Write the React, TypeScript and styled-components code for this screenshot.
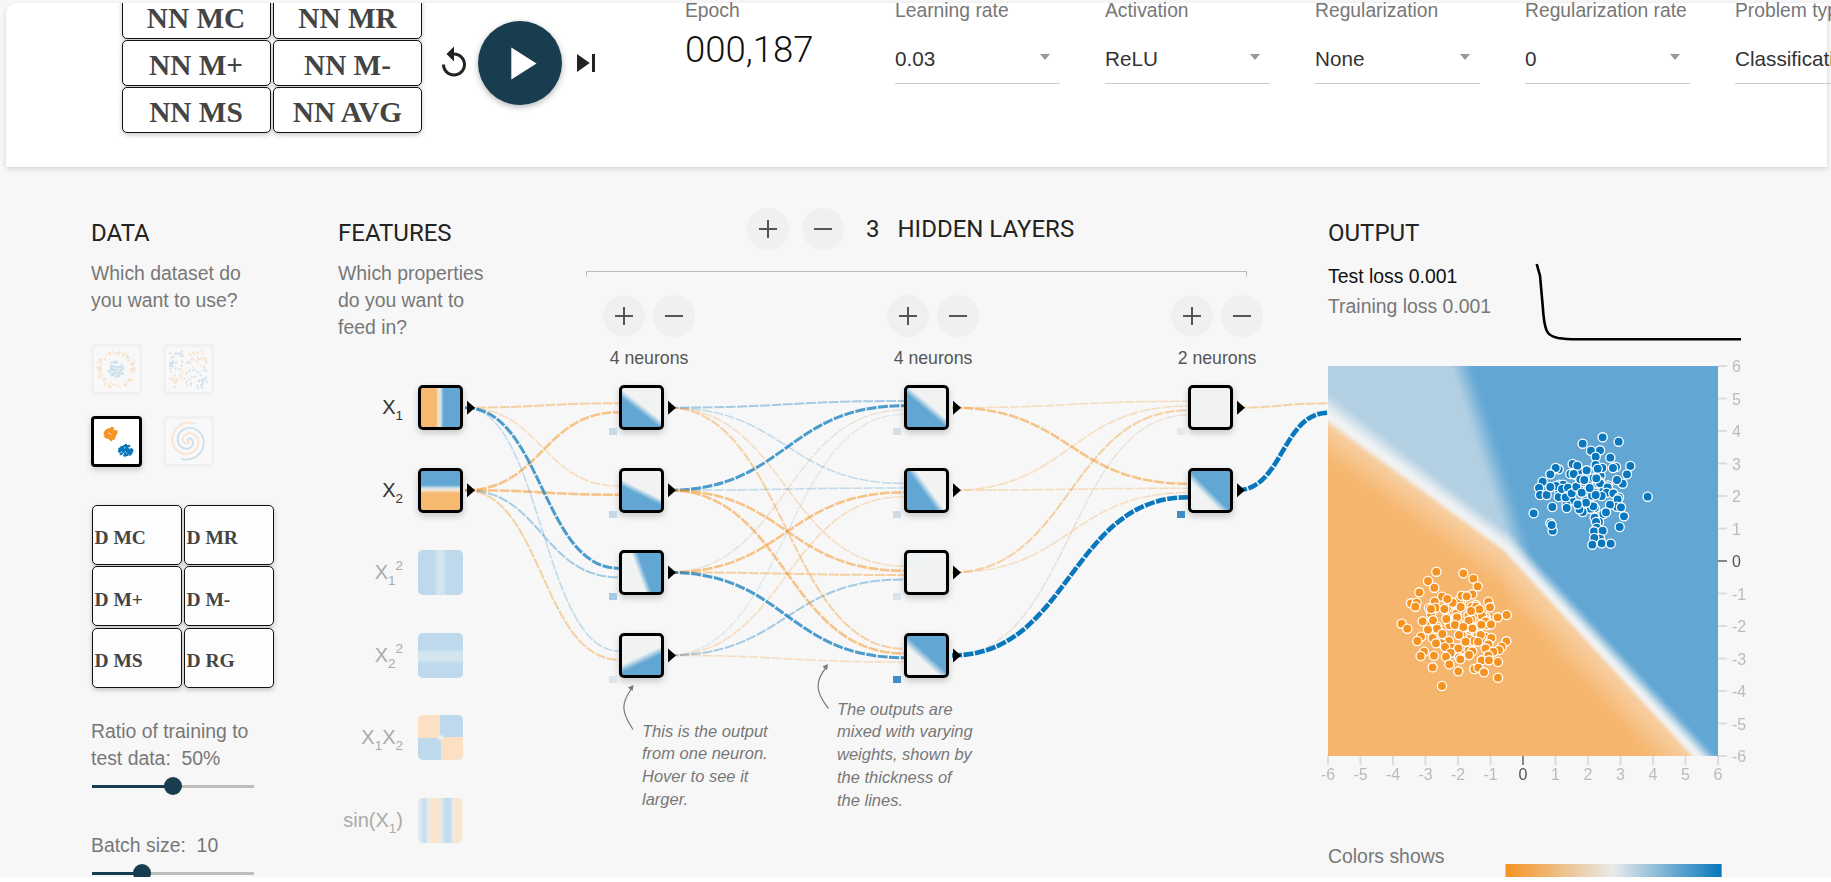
import { useEffect, useRef } from "react";
import styled, { createGlobalStyle } from "styled-components";

const GlobalStyle = createGlobalStyle`
  html, body {
    margin: 0;
    background: #fff;
    font-family: "Liberation Sans", Arial, sans-serif;
    overflow: hidden;
  }
`;

const Page = styled.div`
  width: 1831px;
  height: 877px;
  padding-top: 3px;
  box-sizing: border-box;
  overflow: hidden;
  background: #f7f7f7;
`;

/* ---------- top bar ---------- */

const TopBar = styled.header`
  position: relative;
  z-index: 2;
  display: flex;
  align-items: flex-start;
  width: 1821px;
  height: 164px;
  margin-left: 6px;
  padding-left: 115.5px;
  box-sizing: border-box;
  background: #fff;
  border-top-left-radius: 10px;
  box-shadow: 0 2px 5px rgba(0, 0, 0, 0.14);
`;

const NnClip = styled.div`
  flex-shrink: 0;
  margin-top: -10px;
  clip-path: inset(10px -12px -12px -12px);
`;

const NnGrid = styled.div`
  display: grid;
  grid-template-columns: 149px 149px;
  grid-auto-rows: 45.5px;
  gap: 1.5px 2.5px;
`;

const CalcButton = styled.button`
  border: 1.5px solid #111;
  border-radius: 5px;
  background: #fff;
  color: #444;
  font-family: "Liberation Serif", "Times New Roman", serif;
  font-weight: bold;
  box-shadow: 0 2px 5px rgba(0, 0, 0, 0.22);
  box-sizing: border-box;
  padding: 0;
`;

const NnButton = styled(CalcButton)`
  font-size: 29.3px;
  text-align: center;
  padding-top: 5px;
`;

const Controls = styled.div`
  display: flex;
  align-items: center;
  gap: 6px;
  flex-shrink: 0;
  margin: 18px 81px 0 14px;
`;

const IconButton = styled.button`
  width: 36px;
  height: 36px;
  padding: 0;
  border: none;
  background: none;
  color: #222;
  display: flex;

  svg {
    width: 36px;
    height: 36px;
    fill: currentColor;
  }
`;

const PlayButton = styled.button`
  width: 84px;
  height: 84px;
  padding: 0;
  border: none;
  border-radius: 50%;
  background: #183d4e;
  box-shadow: 0 2px 6px rgba(0, 0, 0, 0.3);
  display: flex;
  align-items: center;
  justify-content: center;

  svg {
    width: 55px;
    height: 55px;
    fill: #fff;
  }
`;

const Epoch = styled.div`
  flex-shrink: 0;
  width: 210px;
`;

const TopLabel = styled.div`
  color: #777;
  font-size: 19.3px;
  line-height: 20px;
  white-space: nowrap;
  margin-top: -2px;
`;

const EpochValue = styled.div`
  font-family: Roboto, sans-serif;
  font-size: 36.5px;
  font-weight: 300;
  line-height: 42px;
  margin-top: 7.5px;
  color: #111;
`;

const DropdownRow = styled.div`
  display: flex;
  gap: 45px;
  flex-shrink: 0;
`;

const Dropdown = styled.div`
  width: 165px;
  flex-shrink: 0;
`;

const SelectBox = styled.div`
  display: flex;
  align-items: center;
  justify-content: space-between;
  height: 52px;
  margin-top: 11px;
  padding: 3px 10px 0 0;
  box-sizing: border-box;
  border-bottom: 1px solid #ccc;
  color: #333;
  font-size: 20.7px;
  white-space: nowrap;
`;

const Caret = styled.span`
  flex-shrink: 0;
  width: 0;
  height: 0;
  border-left: 5.5px solid transparent;
  border-right: 5.5px solid transparent;
  border-top: 6px solid #999;
  margin-bottom: 4px;
`;

/* ---------- main columns ---------- */

const Main = styled.main`
  position: relative;
  display: grid;
  grid-template-columns: 247px 990px 1fr;
  height: 710px;
  padding: 54px 0 0 91px;
  box-sizing: border-box;
`;

const Heading = styled.h4`
  margin: 0;
  font-family: Roboto, sans-serif;
  font-size: 24px;
  font-weight: 400;
  line-height: 24px;
  color: #222;
  white-space: nowrap;
`;

const Lead = styled.p`
  margin: 14.5px 0 0;
  color: #777;
  font-size: 19.4px;
  line-height: 27px;
`;

const DataColumn = styled.section``;

const DatasetGrid = styled.div`
  display: grid;
  grid-template-columns: 51px 51px;
  grid-auto-rows: 51px;
  gap: 21px;
  margin-top: 30px;
`;

const Dataset = styled.div<{ $selected?: boolean }>`
  box-sizing: border-box;
  border: 3px solid ${(p) => (p.$selected ? "#000" : "#f1f1f1")};
  border-radius: 4px;
  background: ${(p) => (p.$selected ? "#fff" : "#f8f8f8")};
  box-shadow: ${(p) => (p.$selected ? "0 3px 7px rgba(0,0,0,.18)" : "none")};

  svg {
    display: block;
    width: 45px;
    height: 45px;
  }
`;

const DGrid = styled.div`
  display: grid;
  grid-template-columns: 90px 90px;
  grid-auto-rows: 60px;
  gap: 1.5px 2px;
  margin: 38px 0 30px 1px;
`;

const DButton = styled(CalcButton)`
  font-size: 19.5px;
  text-align: left;
  padding: 7px 0 0 1.5px;
  background: #fdfdfd;
`;

const SliderLabel = styled.div`
  color: #777;
  font-size: 19.4px;
  line-height: 27px;
  white-space: pre-wrap;
`;

const Track = styled.div`
  position: relative;
  width: 162px;
  height: 3px;
  margin: 13px 0 44px 1px;
  background: #bdbdbd;
`;

const TrackFill = styled.div<{ $to: number }>`
  width: ${(p) => p.$to}px;
  height: 100%;
  background: #183d4e;
`;

const Thumb = styled.div<{ $to: number }>`
  position: absolute;
  top: -8px;
  left: ${(p) => p.$to - 9}px;
  width: 18px;
  height: 18px;
  border-radius: 50%;
  background: #183d4e;
`;

const NetworkColumn = styled.section`
  display: grid;
  grid-template-columns: 248px 1fr;
  align-items: start;
`;

const FeaturesIntro = styled.div``;

const LayersHead = styled.div`
  display: flex;
  align-items: center;
  height: 42px;
  margin-top: -13px;
  padding-left: 161px;
`;

const RoundButton = styled.button`
  flex-shrink: 0;
  width: 42px;
  height: 42px;
  padding: 0;
  border: none;
  border-radius: 50%;
  background: #f0f0f0;
  color: #555;
  display: flex;
  align-items: center;
  justify-content: center;

  svg {
    width: 20px;
    height: 20px;
    stroke: currentColor;
    stroke-width: 2;
    fill: none;
  }
`;

const HeadMinus = styled(RoundButton)`
  margin-left: 13px;
`;

const LayerCount = styled(Heading)`
  margin-left: 22px;
`;

const LayerTitle = styled(Heading)`
  margin-left: 18px;
`;

/* diagram: nodes sit on a free canvas, coordinates are page pixels */

const TOP = 167;

const Diagram = styled.div`
  position: absolute;
  top: 0;
  left: 0;
  width: 1831px;
  height: 710px;
`;

const Links = styled.svg`
  position: absolute;
  top: 0;
  left: 0;
  width: 1831px;
  height: 710px;
`;

const Node = styled.div<{ $x: number; $y: number; $fill: string; $off?: boolean }>`
  position: absolute;
  left: ${(p) => p.$x}px;
  top: ${(p) => p.$y - TOP}px;
  width: 45px;
  height: 45px;
  box-sizing: border-box;
  border-radius: 5px;
  background: ${(p) => p.$fill};
  background-origin: border-box;
  ${(p) =>
    p.$off
      ? ""
      : `border: 3px solid #000;
         background-origin: padding-box;
         background-clip: padding-box;
         box-shadow: 0 3px 7px rgba(0,0,0,.2);`}
`;

const Bias = styled.div<{ $x: number; $y: number; $color: string }>`
  position: absolute;
  left: ${(p) => p.$x}px;
  top: ${(p) => p.$y - TOP}px;
  width: 7.5px;
  height: 7.5px;
  background: ${(p) => p.$color};
`;

const FeatureLabel = styled.div<{ $y: number; $off?: boolean }>`
  position: absolute;
  left: 250px;
  top: ${(p) => p.$y - TOP}px;
  width: 153px;
  height: 45px;
  display: flex;
  align-items: center;
  justify-content: flex-end;
  font-size: 20px;
  color: ${(p) => (p.$off ? "#aaa" : "#333")};

  sub,
  sup {
    font-size: 13.5px;
    line-height: 0;
  }
  sub {
    vertical-align: -6px;
  }
  sup {
    vertical-align: 9px;
  }
`;

const LayerControl = styled.div<{ $center: number }>`
  position: absolute;
  top: ${295 - TOP}px;
  left: ${(p) => p.$center - 80}px;
  width: 160px;
  display: flex;
  flex-direction: column;
  align-items: center;
  gap: 10px;
`;

const LayerButtons = styled.div`
  display: flex;
  gap: 8px;
`;

const NeuronCount = styled.div`
  color: #555;
  font-size: 17.7px;
  line-height: 22px;
`;

const Note = styled.div<{ $x: number; $y: number }>`
  position: absolute;
  left: ${(p) => p.$x}px;
  top: ${(p) => p.$y - TOP}px;
  color: #777;
  font-size: 16.5px;
  font-style: italic;
  line-height: 22.8px;
  white-space: pre-line;
`;

/* ---------- output ---------- */

const OutputColumn = styled.section`
  position: relative;
`;

const StatsRow = styled.div`
  display: flex;
  height: 105px;
  margin-top: 16px;
`;

const LossText = styled.div`
  width: 208px;
  flex-shrink: 0;
  font-size: 19.4px;
  line-height: 30px;
`;

const TestLoss = styled.div`
  color: #111;
`;

const TrainLoss = styled.div`
  color: #777;
`;

const LossChart = styled.svg`
  width: 205px;
  height: 80px;
  fill: none;
  overflow: visible;
`;

const HeatWrap = styled.div`
  position: relative;
  width: 390px;
  height: 390px;
`;

const HeatCanvas = styled.canvas`
  display: block;
`;

const HeatOverlay = styled.svg`
  position: absolute;
  top: 0;
  left: 0;
  width: 390px;
  height: 390px;
  overflow: visible;
  font-size: 16px;
`;

const Legend = styled.div`
  display: flex;
  margin-top: 87px;
`;

const LegendLabel = styled.div`
  width: 177px;
  flex-shrink: 0;
  color: #777;
  font-size: 19.4px;
  line-height: 27px;
`;

const LegendBar = styled.div`
  width: 217px;
  height: 20px;
  margin-top: 20.5px;
  box-sizing: border-box;
  border-left: 1px solid #f8c489;
  border-right: 1px solid #62a7d4;
  background: linear-gradient(to right, #f59322, #e8eaeb 50%, #0877bd);
`;

/* ---------- data ---------- */

const B = "#62a7d4";
const W = "#f1f3f3";
const O = "#f7b96f";
const PB = "#bfd9ec";
const PO = "#fbe0c3";

const diag = (deg: number, a: number, b: number, from = W, to = B) =>
  `linear-gradient(${deg}deg, ${from} ${a}%, ${to} ${b}%)`;

const ROW_Y = [385, 468, 550, 633];
const CENTER = [407.7, 490.2, 572.4, 655.4];

const FEATURES = [
  { y: 385, fill: `linear-gradient(90deg, ${O} 38%, #f3e3cf 45%, #d5e3ea 50%, ${B} 58%)`, off: false, label: <>X<sub>1</sub></> },
  { y: 468, fill: `linear-gradient(180deg, ${B} 36%, #d5e3ea 44%, #f3e3cf 50%, ${O} 56%)`, off: false, label: <>X<sub>2</sub></> },
  { y: 550, fill: `linear-gradient(90deg, ${PB} 36%, #d3e6ef 44%, #d3e6ef 56%, ${PB} 64%)`, off: true, label: <>X<sub>1</sub><sup>2</sup></> },
  { y: 633, fill: `linear-gradient(180deg, ${PB} 36%, #d3e6ef 44%, #d3e6ef 60%, ${PB} 68%)`, off: true, label: <>X<sub>2</sub><sup>2</sup></> },
  {
    y: 715,
    fill: `radial-gradient(circle, #f4f4f2 0, transparent 14%), conic-gradient(${PB} 0 90deg, ${PO} 90deg 180deg, ${PB} 180deg 270deg, ${PO} 270deg)`,
    off: true,
    label: <>X<sub>1</sub>X<sub>2</sub></>,
  },
  {
    y: 798,
    fill: `linear-gradient(90deg, #e6eef0 0, #c7dded 14%, #e9ece8 24%, #fbe3c9 34%, #fbe3c9 44%, #e5e9e8 52%, ${PB} 62%, #c7dded 72%, #eeebe4 78%, #fbe3c9 88%, #f4ece0 100%)`,
    off: true,
    label: <>sin(X<sub>1</sub>)</>,
  },
];

const HIDDEN = [
  {
    x: 619,
    biasX: 609,
    center: 649,
    label: "4 neurons",
    fills: [diag(218, 46, 58), diag(206, 48, 59), diag(70, 44, 56), diag(155, 50, 64)],
    bias: ["#c6dae6", "#c3d9e7", "#a5c9e1", "#dce4ec"],
  },
  {
    x: 904,
    biasX: 893,
    center: 933,
    label: "4 neurons",
    fills: [
      `linear-gradient(220deg, ${W} 42%, ${B} 54%)`,
      diag(234, 44, 56),
      `linear-gradient(135deg, #e8f0f6 0, ${W} 28%)`,
      diag(42, 38, 52),
    ],
    bias: ["#d2dfe8", "#cddce7", "#dae3ea", "#3d8fc6"],
  },
  {
    x: 1188,
    biasX: 1177,
    center: 1217,
    label: "2 neurons",
    fills: [W, diag(45, 36, 49)],
    bias: ["#e3e8ed", "#3d8fc6"],
  },
];

type Weight = "o1" | "o2" | "o3" | "g1" | "b1" | "b2" | "b3" | "b4" | "b5" | "b6";

const WEIGHTS: Record<Weight, { color: string; width: number; opacity: number }> = {
  g1: { color: "#c9a27a", width: 1.4, opacity: 0.28 },
  o1: { color: "#f59322", width: 1.6, opacity: 0.26 },
  o2: { color: "#f59322", width: 2, opacity: 0.4 },
  o3: { color: "#f59322", width: 2.6, opacity: 0.52 },
  b1: { color: "#0877bd", width: 1.3, opacity: 0.12 },
  b2: { color: "#0877bd", width: 1.6, opacity: 0.22 },
  b3: { color: "#0877bd", width: 2, opacity: 0.35 },
  b4: { color: "#0877bd", width: 2.6, opacity: 0.5 },
  b5: { color: "#0877bd", width: 3, opacity: 0.72 },
  b6: { color: "#0877bd", width: 4.6, opacity: 1 },
};

// [x0, y0, x1, y1, weight], y1 reads the little fan of inputs on each node
const LINKS: [number, number, number, number, Weight][] = [
  [465, CENTER[0], 619, 403.3, "o2"],
  [465, CENTER[1], 619, 412.3, "o3"],
  [465, CENTER[0], 619, 486, "o1"],
  [465, CENTER[1], 619, 494.7, "o3"],
  [465, CENTER[0], 619, 568.3, "b5"],
  [465, CENTER[1], 619, 577.3, "b3"],
  [465, CENTER[0], 619, 651, "b2"],
  [465, CENTER[1], 619, 659.7, "o2"],

  [668, CENTER[0], 904, 401, "b3"],
  [668, CENTER[1], 904, 405.7, "b5"],
  [668, CENTER[2], 904, 410, "g1"],
  [668, CENTER[3], 904, 414.3, "b1"],
  [668, CENTER[0], 904, 483.4, "b2"],
  [668, CENTER[1], 904, 488, "b2"],
  [668, CENTER[2], 904, 492.4, "o3"],
  [668, CENTER[3], 904, 496.7, "o1"],
  [668, CENTER[0], 904, 566, "o1"],
  [668, CENTER[1], 904, 570.7, "o3"],
  [668, CENTER[2], 904, 575, "o2"],
  [668, CENTER[3], 904, 579.4, "b3"],
  [668, CENTER[0], 904, 648.7, "o2"],
  [668, CENTER[1], 904, 653.4, "o3"],
  [668, CENTER[2], 904, 657.7, "b5"],
  [668, CENTER[3], 904, 662, "o1"],

  [952, CENTER[0], 1188, 401.3, "o1"],
  [952, CENTER[1], 1188, 406, "o1"],
  [952, CENTER[2], 1188, 410.3, "o2"],
  [952, CENTER[3], 1188, 415, "g1"],
  [952, CENTER[0], 1188, 483.7, "o3"],
  [952, CENTER[1], 1188, 488.3, "o1"],
  [952, CENTER[2], 1188, 492.7, "o1"],
  [952, CENTER[3], 1188, 497.3, "b6"],

  [1237, CENTER[0], 1328, 403.3, "o2"],
  [1237, CENTER[1], 1328, 412.7, "b6"],
];

const ARROW_X = [467, 668, 953, 1237];

// dots traced off the reference, in its 3x crop coordinates
const BLUE_DOTS = [
  [848, 292], [896, 305], [788, 311], [813, 332], [840, 331], [827, 350], [871, 353], [931, 378], [921, 403], [908, 431],
  [891, 420], [758, 372], [772, 377], [716, 388], [707, 384], [691, 403], [751, 402], [761, 402], [800, 391], [827, 375],
  [847, 384], [833, 386], [888, 381], [879, 384], [668, 425], [657, 444], [660, 465], [680, 465], [708, 438], [691, 441],
  [716, 471], [726, 447], [737, 472], [744, 443], [755, 460], [769, 440], [785, 458], [781, 418], [793, 420], [809, 444],
  [840, 430], [829, 415], [863, 442], [860, 458], [845, 468], [827, 465], [880, 460], [897, 472], [893, 478], [891, 500],
  [903, 502], [870, 494], [850, 522], [858, 517], [812, 506], [820, 499], [798, 488], [788, 516], [778, 508], [773, 493],
  [697, 501], [740, 504], [641, 520], [691, 550], [698, 572], [695, 555], [824, 533], [837, 545], [828, 546], [830, 563],
  [822, 574], [848, 572], [899, 561], [912, 529], [983, 470], [840, 596], [823, 594], [817, 614], [845, 610], [872, 611],
];

const ORANGE_DOTS = [
  [349, -85], [430, -80], [324, -57], [460, -64], [343, -37], [473, -41], [298, -23], [366, -10], [425, -13], [457, -17],
  [440, -11], [382, -3], [273, 10], [290, 8], [344, 5], [505, 5], [286, 20], [327, 24], [347, 23], [333, 27], [373, 27],
  [455, 20], [468, 20], [422, 21], [510, 22], [478, 28], [453, 33], [560, 45], [533, 52], [411, 52], [379, 57], [446, 62],
  [339, 61], [308, 64], [497, 64], [245, 71], [484, 74], [513, 73], [405, 75], [430, 81], [262, 86], [351, 86], [324, 89],
  [457, 85], [367, 102], [417, 105], [482, 105], [303, 110], [514, 114], [292, 123], [463, 123], [437, 125], [474, 125],
  [559, 124], [348, 130], [505, 133], [375, 141], [545, 140], [415, 145], [497, 145], [537, 150], [312, 155], [457, 154],
  [520, 155], [392, 158], [447, 165], [505, 166], [342, 167], [302, 168], [378, 170], [417, 172], [421, 178], [485, 181],
  [507, 181], [534, 186], [388, 193], [338, 202], [463, 207], [475, 203], [415, 214], [492, 217], [534, 233], [366, 258],
];

const TICKS = [-6, -5, -4, -3, -2, -1, 0, 1, 2, 3, 4, 5, 6];

/* ---------- small drawings ---------- */

const random = (seed: number) => () => (seed = (seed * 16807) % 2147483647) / 2147483647;

function scatter(seed: number, n: number, place: (a: number, r: number) => [number, number]) {
  const rnd = random(seed);
  return Array.from({ length: n }, () => place(rnd() * Math.PI * 2, rnd()));
}

// the dense middle of each cloud, under the traced dots
const ORANGE_CORE = scatter(41, 45, (a, r) => [410 + Math.sqrt(r) * 105 * Math.cos(a), 85 + Math.sqrt(r) * 85 * Math.sin(a)]);
const BLUE_CORE = scatter(57, 30, (a, r) => [795 + Math.sqrt(r) * 85 * Math.cos(a), 450 + Math.sqrt(r) * 60 * Math.sin(a)]);

const Dots = ({ points, color, opacity = 1, r = 0.9 }: { points: [number, number][]; color: string; opacity?: number; r?: number }) => (
  <g fill={color} opacity={opacity}>
    {points.map(([x, y], i) => (
      <circle key={i} cx={x} cy={y} r={r} />
    ))}
  </g>
);

const CircleSet = () => (
  <svg viewBox="0 0 45 45">
    <Dots
      points={scatter(11, 90, (a, r) => [22 + (14.5 + r * 5) * Math.cos(a), 22 + (14.5 + r * 5) * Math.sin(a)])}
      color="#f59322"
      opacity={0.2}
      r={1}
    />
    <Dots
      points={scatter(29, 70, (a, r) => [22 + Math.sqrt(r) * 8 * Math.cos(a), 22 + Math.sqrt(r) * 8 * Math.sin(a)])}
      color="#0877bd"
      opacity={0.18}
      r={1}
    />
  </svg>
);

const XorSet = () => {
  const rnd = random(77);
  const quad = (x0: number, y0: number, n: number) =>
    Array.from({ length: n }, () => [x0 + rnd() * 18, y0 + rnd() * 18] as [number, number]);
  return (
    <svg viewBox="0 0 45 45">
      <Dots points={[...quad(4, 4, 30), ...quad(23, 23, 30)]} color="#0877bd" opacity={0.18} r={1} />
      <Dots points={[...quad(23, 4, 30), ...quad(4, 23, 30)]} color="#f59322" opacity={0.2} r={1} />
    </svg>
  );
};

const GaussSet = () => (
  <svg viewBox="0 0 45 45">
    <Dots
      points={scatter(5, 70, (a, r) => [16.7 + Math.sqrt(r) * 6.4 * Math.cos(a), 15 + Math.sqrt(r) * 6.4 * Math.sin(a)])}
      color="#f59322"
      r={1.2}
    />
    <Dots
      points={scatter(17, 70, (a, r) => [31.7 + Math.sqrt(r) * 6.8 * Math.cos(a), 31.3 + Math.sqrt(r) * 5.8 * Math.sin(a)])}
      color="#0877bd"
      r={1.2}
    />
  </svg>
);

const spiralPath = (start: number, turns: number, size: number) => {
  const parts: string[] = [];
  for (let i = 0; i <= 80; i++) {
    const t = (i / 80) * turns * Math.PI * 2;
    const r = (i / 80) * size;
    parts.push(`${i ? "L" : "M"}${(22 + r * Math.cos(t + start)).toFixed(1)} ${(22 + r * Math.sin(t + start)).toFixed(1)}`);
  }
  return parts.join("");
};

const SpiralSet = () => (
  <svg viewBox="0 0 45 45" fill="none" strokeWidth={1.7}>
    <path d={spiralPath(0.4, 1.75, 19)} stroke="#f59322" opacity={0.2} />
    <path d={spiralPath(3.5, 1.75, 19)} stroke="#0877bd" opacity={0.2} />
  </svg>
);

const PlusIcon = () => (
  <svg viewBox="0 0 20 20">
    <path d="M10 1v18M1 10h18" />
  </svg>
);

const MinusIcon = () => (
  <svg viewBox="0 0 20 20">
    <path d="M1 10h18" />
  </svg>
);

/* ---------- decision surface ---------- */

const smooth = (t: number) => {
  const c = Math.min(1, Math.max(0, t));
  return c * c * (3 - 2 * c);
};

type Rgb = [number, number, number];

const mix = (a: Rgb, b: Rgb, t: number): Rgb => [
  a[0] + (b[0] - a[0]) * t,
  a[1] + (b[1] - a[1]) * t,
  a[2] + (b[2] - a[2]) * t,
];

function surface(u: number, v: number): Rgb {
  const mid: Rgb = [240, 242, 243];
  const slope = u < 177 ? 0.74 : 1.088;
  const edge = u < 177 ? 50 + u * 0.74 : 181 + (u - 177) * 1.088;
  const d = (edge - v) / Math.sqrt(1 + slope * slope);
  // the white band is broad at the left edge and tight from the kink on
  const along = Math.min(1, u / 177);

  if (d > 0) {
    const w = smooth((u - (119 + 0.32 * v)) / 28);
    const target = mix([179, 208, 227], [98, 167, 212], w);
    return mix(mid, target, smooth(d / (22 - 6 * along)));
  }
  const near = mix(mid, [247, 206, 160], smooth(-d / (10 - 3 * along)));
  return mix(near, [246, 181, 108], smooth(-d / 45));
}

const Heatmap = () => {
  const ref = useRef<HTMLCanvasElement>(null);

  useEffect(() => {
    const ctx = ref.current?.getContext("2d");
    if (!ctx) return;
    const img = ctx.createImageData(390, 390);
    for (let v = 0; v < 390; v++) {
      for (let u = 0; u < 390; u++) {
        const [r, g, b] = surface(u, v);
        const i = (v * 390 + u) * 4;
        img.data[i] = r;
        img.data[i + 1] = g;
        img.data[i + 2] = b;
        img.data[i + 3] = 255;
      }
    }
    ctx.putImageData(img, 0, 0);
  }, []);

  return <HeatCanvas ref={ref} width={390} height={390} />;
};

const Dot = ({ x, y, color }: { x: number; y: number; color: string }) => (
  <circle cx={x} cy={y} r={4.6} fill={color} stroke="#fff" strokeWidth={1.3} />
);

const Axes = () => (
  <HeatOverlay viewBox="0 0 390 390">
    {TICKS.map((t) => {
      const pos = (t + 6) * 32.5;
      const zero = t === 0;
      return (
        <g key={t}>
          <line x1={pos} x2={pos} y1={390} y2={399} stroke={zero ? "#888" : "#ddd"} strokeWidth={2} />
          <line x1={390} x2={399} y1={390 - pos} y2={390 - pos} stroke={zero ? "#888" : "#ddd"} strokeWidth={2} />
          <text x={pos} y={414} textAnchor="middle" fill={zero ? "#555" : "#bbb"}>
            {t}
          </text>
          <text x={404} y={390 - pos + 6} fill={zero ? "#555" : "#bbb"}>
            {t}
          </text>
        </g>
      );
    })}
    {ORANGE_CORE.map(([x, y], i) => (
      <Dot key={i} x={x / 3 - 8} y={y / 3 + 234} color="#f59322" />
    ))}
    {ORANGE_DOTS.map(([x, y], i) => (
      <Dot key={i} x={x / 3 - 8} y={y / 3 + 234} color="#f59322" />
    ))}
    {BLUE_CORE.map(([x, y], i) => (
      <Dot key={i} x={x / 3 - 8} y={y / 3 - 26} color="#0877bd" />
    ))}
    {BLUE_DOTS.map(([x, y], i) => (
      <Dot key={i} x={x / 3 - 8} y={y / 3 - 26} color="#0877bd" />
    ))}
  </HeatOverlay>
);

/* ---------- page ---------- */

const DROPDOWNS = [
  ["Learning rate", "0.03"],
  ["Activation", "ReLU"],
  ["Regularization", "None"],
  ["Regularization rate", "0"],
  ["Problem type", "Classification"],
];

const NN_KEYS = ["NN MC", "NN MR", "NN M+", "NN M-", "NN MS", "NN AVG"];
const D_KEYS = ["D MC", "D MR", "D M+", "D M-", "D MS", "D RG"];

export default function App() {
  return (
    <Page>
      <GlobalStyle />
      <TopBar>
        <NnClip>
          <NnGrid>
            {NN_KEYS.map((key) => (
              <NnButton key={key}>{key}</NnButton>
            ))}
          </NnGrid>
        </NnClip>
        <Controls>
          <IconButton aria-label="Reset">
            <svg viewBox="0 0 24 24">
              <path d="M12 5V1L7 6l5 5V7c3.31 0 6 2.69 6 6s-2.69 6-6 6-6-2.69-6-6H4c0 4.42 3.58 8 8 8s8-3.58 8-8-3.58-8-8-8z" />
            </svg>
          </IconButton>
          <PlayButton aria-label="Play">
            <svg viewBox="0 0 24 24">
              <path d="M8 5v14l11-7z" />
            </svg>
          </PlayButton>
          <IconButton aria-label="Step">
            <svg viewBox="0 0 24 24">
              <path d="M6 18l8.5-6L6 6v12zM16 6v12h2V6h-2z" />
            </svg>
          </IconButton>
        </Controls>
        <Epoch>
          <TopLabel>Epoch</TopLabel>
          <EpochValue>000,187</EpochValue>
        </Epoch>
        <DropdownRow>
          {DROPDOWNS.map(([label, value]) => (
            <Dropdown key={label}>
              <TopLabel>{label}</TopLabel>
              <SelectBox>
                {value}
                <Caret />
              </SelectBox>
            </Dropdown>
          ))}
        </DropdownRow>
      </TopBar>

      <Main>
        <Diagram>
          <Links viewBox={`0 ${TOP} 1831 710`} fill="none">
            <path d="M586.5 276.5v-5h660v5" stroke="#bbb" strokeWidth={1} />
            {LINKS.map(([x0, y0, x1, y1, weight], i) => {
              const mx = (x0 + x1) / 2;
              const { color, width, opacity } = WEIGHTS[weight];
              return (
                <path
                  key={i}
                  d={`M${x0} ${y0}C${mx} ${y0} ${mx} ${y1} ${x1} ${y1}`}
                  stroke={color}
                  strokeWidth={width}
                  strokeOpacity={opacity}
                  strokeDasharray="10 1.5"
                />
              );
            })}
            {ARROW_X.map((x, l) =>
              CENTER.slice(0, l === 3 ? 2 : l === 0 ? 2 : 4).map((y) => (
                <path key={`${x}-${y}`} d={`M${x} ${y - 7}l8 7l-8 7z`} fill="#000" />
              )),
            )}
            <g stroke="#777" strokeWidth={1.2}>
              <path d="M633 729.5C622 713 620 704 632 688" />
              <path d="M828.5 708.5C816 693 814 682 826.5 667" />
            </g>
            <g fill="#777">
              <path d="M633.5 685l-5.5 2.5l4.5 3.5z" />
              <path d="M828 664l-5.5 2.5l4.5 3.5z" />
            </g>
          </Links>

          {FEATURES.map((f, i) => (
            <div key={i}>
              <FeatureLabel $y={f.y} $off={f.off}>
                <span>{f.label}</span>
              </FeatureLabel>
              <Node $x={418} $y={f.y} $fill={f.fill} $off={f.off} />
            </div>
          ))}

          {HIDDEN.map((layer) => (
            <div key={layer.x}>
              <LayerControl $center={layer.center}>
                <LayerButtons>
                  <RoundButton aria-label="Add neuron">
                    <PlusIcon />
                  </RoundButton>
                  <RoundButton aria-label="Remove neuron">
                    <MinusIcon />
                  </RoundButton>
                </LayerButtons>
                <NeuronCount>{layer.label}</NeuronCount>
              </LayerControl>
              {layer.fills.map((fill, i) => (
                <Node key={i} $x={layer.x} $y={ROW_Y[i]} $fill={fill} />
              ))}
              {layer.bias.map((color, i) => (
                <Bias key={i} $x={layer.biasX} $y={ROW_Y[i] + 42.5} $color={color} />
              ))}
            </div>
          ))}

          <Note $x={642} $y={719.5}>
            {"This is the output\nfrom one neuron.\nHover to see it\nlarger."}
          </Note>
          <Note $x={837} $y={697.5}>
            {"The outputs are\nmixed with varying\nweights, shown by\nthe thickness of\nthe lines."}
          </Note>
        </Diagram>

        <DataColumn>
          <Heading>DATA</Heading>
          <Lead>
            Which dataset do
            <br />
            you want to use?
          </Lead>
          <DatasetGrid>
            <Dataset>
              <CircleSet />
            </Dataset>
            <Dataset>
              <XorSet />
            </Dataset>
            <Dataset $selected>
              <GaussSet />
            </Dataset>
            <Dataset>
              <SpiralSet />
            </Dataset>
          </DatasetGrid>
          <DGrid>
            {D_KEYS.map((key) => (
              <DButton key={key}>{key}</DButton>
            ))}
          </DGrid>
          <SliderLabel>{"Ratio of training to\ntest data:  50%"}</SliderLabel>
          <Track>
            <TrackFill $to={81} />
            <Thumb $to={81} />
          </Track>
          <SliderLabel>{"Batch size:  10"}</SliderLabel>
          <Track>
            <TrackFill $to={50} />
            <Thumb $to={50} />
          </Track>
        </DataColumn>

        <NetworkColumn>
          <FeaturesIntro>
            <Heading>FEATURES</Heading>
            <Lead>
              Which properties
              <br />
              do you want to
              <br />
              feed in?
            </Lead>
          </FeaturesIntro>
          <LayersHead>
            <RoundButton aria-label="Add layer">
              <PlusIcon />
            </RoundButton>
            <HeadMinus aria-label="Remove layer">
              <MinusIcon />
            </HeadMinus>
            <LayerCount as="span">3</LayerCount>
            <LayerTitle as="span">HIDDEN LAYERS</LayerTitle>
          </LayersHead>
        </NetworkColumn>

        <OutputColumn>
          <Heading>OUTPUT</Heading>
          <StatsRow>
            <LossText>
              <TestLoss>Test loss 0.001</TestLoss>
              <TrainLoss>Training loss 0.001</TrainLoss>
            </LossText>
            <LossChart viewBox="0 0 205 80">
              <path
                d="M0.7 3L4 14.7L6.7 44.7C7.5 58 9 66 10.7 69.7C13 74.5 17 76 22 77C28 78 35 78.3 41 78.3H205"
                stroke="#000"
                strokeWidth={2.6}
              />
            </LossChart>
          </StatsRow>
          <HeatWrap>
            <Heatmap />
            <Axes />
          </HeatWrap>
          <Legend>
            <LegendLabel>Colors shows</LegendLabel>
            <LegendBar />
          </Legend>
        </OutputColumn>
      </Main>
    </Page>
  );
}
